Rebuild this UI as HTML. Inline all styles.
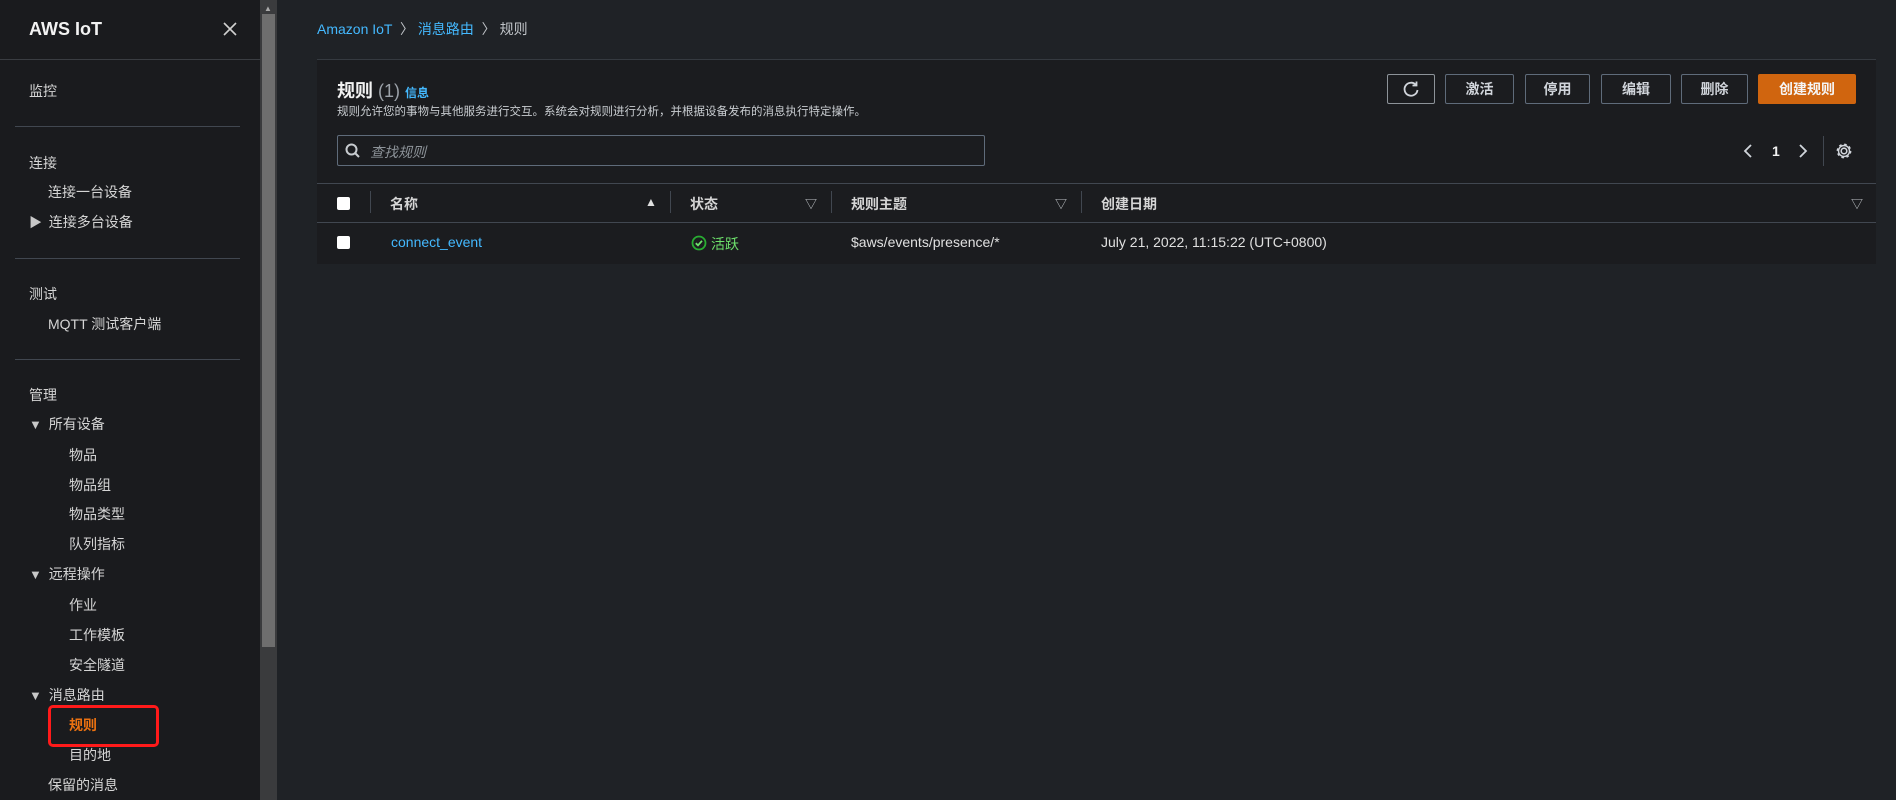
<!DOCTYPE html>
<html><head><meta charset="utf-8"><style>
*{margin:0;padding:0;box-sizing:border-box}
body{width:1896px;height:800px;overflow:hidden;background:#1f2226;font-family:"Liberation Sans","Noto Sans CJK SC",sans-serif;color:#d1d5db;position:relative}
.abs{position:absolute;white-space:nowrap}
#side{position:absolute;left:0;top:0;width:260px;height:800px;background:#1a1b1e}
.si{position:absolute;font-size:14px;color:#d5d5d5;line-height:18px}
.div{position:absolute;left:15px;width:225px;height:1px;background:#414750}
.tri{font-size:13px;color:#c8c8c8;display:inline-block;width:12px}
#scroll{position:absolute;left:260px;top:0;width:17px;height:800px;background:#3a3b3d}
#thumb{position:absolute;left:262px;top:14px;width:13px;height:633px;background:#6e6e6e}
#panel{position:absolute;left:317px;top:59px;width:1559px;height:205px;background:#1b1c1f;border-top:1px solid #353a40}
.btn{position:absolute;top:74px;height:30px;border:1px solid #5f6b7a;border-radius:2px;font-size:14px;font-weight:bold;color:#d1d5db;display:flex;align-items:center;justify-content:center;background:#1b1c1f}
.hl{position:absolute;left:317px;width:1559px;height:1px;background:#414750}
.sep{position:absolute;top:191px;width:1px;height:22px;background:#414750}
.th{position:absolute;top:194px;font-size:14px;font-weight:bold;color:#d5d5d5}
.cb{position:absolute;left:337px;width:13px;height:13px;background:#fff;border-radius:2px}
.sort{position:absolute;top:195px;font-size:12px;color:#c0c4c8}
</style></head><body>
<div id="side">
<div class="abs" style="left:29px;top:19px;font-size:18px;font-weight:bold;color:#f2f2f2">AWS IoT</div>
<svg class="abs" style="left:223px;top:22px" width="14" height="14" viewBox="0 0 14 14"><path d="M1 1L13 13M13 1L1 13" stroke="#d0d0d0" stroke-width="1.6"/></svg>
<div style="position:absolute;left:0;top:59px;width:260px;height:1px;background:#3a3d42"></div>
<div class="si" style="left:29px;top:82px">监控</div>
<div class="div" style="top:126px"></div>
<div class="si" style="left:29px;top:154px">连接</div>
<div class="si" style="left:48px;top:183px">连接一台设备</div>
<div class="si" style="left:29px;top:213px"><span class="tri">▶</span>&nbsp; 连接多台设备</div>
<div class="div" style="top:258px"></div>
<div class="si" style="left:29px;top:285px">测试</div>
<div class="si" style="left:48px;top:315px">MQTT 测试客户端</div>
<div class="div" style="top:359px"></div>
<div class="si" style="left:29px;top:386px">管理</div>
<div class="si" style="left:29px;top:415px"><span class="tri">▼</span>&nbsp; 所有设备</div>
<div class="si" style="left:69px;top:446px">物品</div>
<div class="si" style="left:69px;top:476px">物品组</div>
<div class="si" style="left:69px;top:505px">物品类型</div>
<div class="si" style="left:69px;top:535px">队列指标</div>
<div class="si" style="left:29px;top:565px"><span class="tri">▼</span>&nbsp; 远程操作</div>
<div class="si" style="left:69px;top:596px">作业</div>
<div class="si" style="left:69px;top:626px">工作模板</div>
<div class="si" style="left:69px;top:656px">安全隧道</div>
<div class="si" style="left:29px;top:686px"><span class="tri">▼</span>&nbsp; 消息路由</div>
<div class="si" style="left:69px;top:716px;color:#ec7211;font-weight:bold">规则</div>
<div style="position:absolute;left:48px;top:705px;width:111px;height:42px;border:3px solid #ff1a1a;border-radius:5px"></div>
<div class="si" style="left:69px;top:746px">目的地</div>
<div class="si" style="left:48px;top:776px">保留的消息</div>
</div>
<div id="scroll"></div><div id="thumb"></div>
<div class="abs" style="left:264px;top:4px;font-size:8px;color:#aaa">▲</div>

<div class="abs" style="left:317px;top:19px;font-size:14px;color:#44b9ff">Amazon IoT <span style="color:#c0c4c8">&nbsp;〉</span>&nbsp;消息路由 <span style="color:#c0c4c8">&nbsp;〉 规则</span></div>

<div id="panel"></div>
<div class="abs" style="left:337px;top:77px;font-size:18px;font-weight:bold;color:#f2f2f2">规则 <span style="font-weight:normal;color:#9ba1a8">(1)</span> <span style="font-size:12px;color:#44b9ff">信息</span></div>
<div class="abs" style="left:337px;top:103px;font-size:11.5px;color:#c8ccd0">规则允许您的事物与其他服务进行交互。系统会对规则进行分析，并根据设备发布的消息执行特定操作。</div>
<div class="abs" style="left:337px;top:135px;width:648px;height:31px;border:1px solid #5f6b7a;border-radius:2px;background:#1b1c1f"></div>
<svg class="abs" style="left:345px;top:143px" width="16" height="16" viewBox="0 0 16 16"><circle cx="6.5" cy="6.5" r="5" stroke="#c8ccd0" stroke-width="2" fill="none"/><path d="M10 10L14 14" stroke="#c8ccd0" stroke-width="2"/></svg>
<div class="abs" style="left:370px;top:142px;font-size:14px;font-style:italic;color:#8d9399">查找规则</div>

<div class="btn" style="left:1387px;width:48px;border-color:#8d9399"><svg width="18" height="18" viewBox="0 0 18 18"><path d="M14 5A6.5 6.5 0 1 0 15.5 10" stroke="#d1d5db" stroke-width="1.8" fill="none"/><path d="M14.5 1.5V5.5H10.5" stroke="#d1d5db" stroke-width="1.8" fill="none"/></svg></div>
<div class="btn" style="left:1445px;width:69px">激活</div>
<div class="btn" style="left:1525px;width:65px">停用</div>
<div class="btn" style="left:1601px;width:70px">编辑</div>
<div class="btn" style="left:1681px;width:67px">删除</div>
<div class="btn" style="left:1758px;width:98px;background:#d0650f;border-color:#d0650f;color:#f5f5f5">创建规则</div>

<svg class="abs" style="left:1742px;top:143px" width="12" height="16" viewBox="0 0 12 16"><path d="M9 2L3 8L9 14" stroke="#d1d5db" stroke-width="1.8" fill="none"/></svg>
<div class="abs" style="left:1772px;top:143px;font-size:14px;font-weight:bold;color:#f2f2f2">1</div>
<svg class="abs" style="left:1797px;top:143px" width="12" height="16" viewBox="0 0 12 16"><path d="M3 2L9 8L3 14" stroke="#d1d5db" stroke-width="1.8" fill="none"/></svg>
<div class="abs" style="left:1823px;top:136px;width:1px;height:30px;background:#414750"></div>
<svg class="abs" style="left:1835px;top:142px" width="18" height="18" viewBox="0 0 18 18"><circle cx="9" cy="9" r="2.8" stroke="#d1d5db" stroke-width="1.6" fill="none"/><circle cx="9" cy="9" r="6.2" stroke="#d1d5db" stroke-width="2.4" fill="none" stroke-dasharray="2.4 2.46"/><circle cx="9" cy="9" r="5.5" stroke="#d1d5db" stroke-width="1.4" fill="none"/></svg>

<div class="hl" style="top:183px"></div>
<div class="hl" style="top:222px"></div>
<div class="cb" style="top:197px"></div>
<div class="sep" style="left:370px"></div>
<div class="th" style="left:390px">名称</div>
<div class="sort" style="left:645px;color:#e0e0e0">▲</div>
<div class="sep" style="left:670px"></div>
<div class="th" style="left:690px">状态</div>
<div class="sort" style="left:805px">▽</div>
<div class="sep" style="left:831px"></div>
<div class="th" style="left:851px">规则主题</div>
<div class="sort" style="left:1055px">▽</div>
<div class="sep" style="left:1081px"></div>
<div class="th" style="left:1101px">创建日期</div>
<div class="sort" style="left:1851px">▽</div>

<div class="cb" style="top:236px"></div>
<div class="abs" style="left:391px;top:234px;font-size:14px;color:#44b9ff">connect_event</div>
<svg class="abs" style="left:691px;top:235px" width="16" height="16" viewBox="0 0 16 16"><circle cx="8" cy="8" r="6.5" stroke="#29ad32" stroke-width="1.8" fill="none"/><path d="M4.8 8.2L7 10.3L11 5.8" stroke="#6ee26c" stroke-width="1.8" fill="none"/></svg>
<div class="abs" style="left:711px;top:234px;font-size:14px;color:#6ee26c">活跃</div>
<div class="abs" style="left:851px;top:234px;font-size:14px;color:#e0e0e0">$aws/events/presence/*</div>
<div class="abs" style="left:1101px;top:234px;font-size:14px;color:#e0e0e0">July 21, 2022, 11:15:22 (UTC+0800)</div>
</body></html>
